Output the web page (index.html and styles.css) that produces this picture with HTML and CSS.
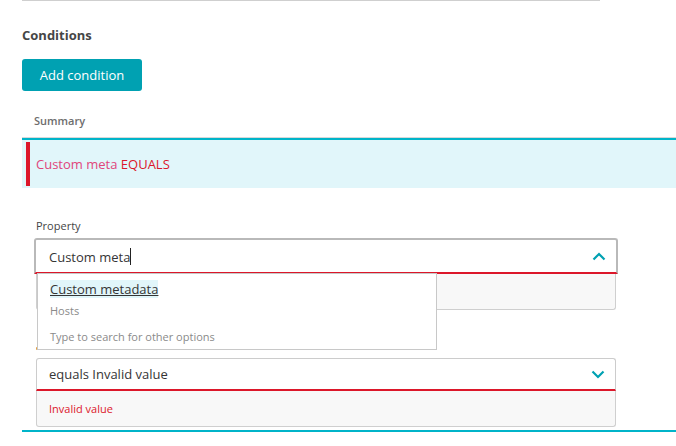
FILE: index.html
```html
<!DOCTYPE html>
<html>
<head>
<meta charset="utf-8">
<link rel="stylesheet" href="styles.css">
</head>
<body>
<div class="topline"></div>
<div class="page">
  <h2 class="title">Conditions</h2>
  <button class="btn">Add condition</button>
  <div class="summary-head">Summary</div>
  <div class="summary-row">
    <div class="flag"></div>
    <div class="summary-text"><span class="pink">Custom meta</span> <span class="red">EQUALS</span></div>
  </div>
  <div class="form">
    <div class="label">Property</div>
    <div class="field">
      <div class="input focused">
        <span class="value">Custom meta</span><span class="caret"></span>
        <svg class="chev" width="14" height="9" viewBox="0 0 14 9"><path d="M1.5 7.5 L7 2 L12.5 7.5" fill="none" stroke="#00a1b2" stroke-width="2.2"/></svg>
      </div>
      <div class="below"></div>
      <div class="dropdown">
        <div class="opt"><span class="opt-main">Custom metadata</span></div>
        <div class="opt-sub">Hosts</div>
        <div class="opt-hint">Type to search for other options</div>
      </div>
    </div>
    <div class="label2"><span class="dot"></span></div>
    <div class="field">
      <div class="input">
        <span class="value">equals Invalid value</span>
        <svg class="chev" width="14" height="9" viewBox="0 0 14 9"><path d="M1.5 1.5 L7 7 L12.5 1.5" fill="none" stroke="#00a1b2" stroke-width="2.2"/></svg>
      </div>
      <div class="below err">Invalid value</div>
    </div>
  </div>
  <div class="bottomline"></div>
</div>
</body>
</html>
```
FILE: styles.css
```css
html, body {
  margin: 0;
  padding: 0;
  background: #fff;
}
body {
  font-family: "Open Sans", "Liberation Sans", sans-serif;
  color: #454646;
  width: 676px;
  height: 446px;
  overflow: hidden;
}
.topline {
  margin-left: 22px;
  width: 578px;
  height: 1px;
  background: #cfcfcf;
}
.page {
  padding-left: 22px;
}
.title {
  margin: 0;
  padding-top: 25px;
  font-size: 13px;
  line-height: 18px;
  font-weight: 700;
  color: #454646;
}
.btn {
  display: block;
  margin-top: 15px;
  width: 120px;
  height: 32px;
  border: 0;
  border-radius: 3px;
  background: #00a1b2;
  color: #fff;
  font-family: inherit;
  font-size: 13px;
  padding: 0;
}
.summary-head {
  margin-top: 22px;
  padding-left: 12px;
  font-size: 11px;
  font-weight: 600;
  line-height: 15px;
  color: #6d6d6d;
  height: 25px;
  border-bottom: 1px solid #d8d8d8;
  box-sizing: border-box;
}
.summary-row {
  border-top: 2px solid #00b4c9;
  background: #e1f6fa;
  height: 50px;
  display: flex;
  align-items: center;
  padding: 2px 0 2px 4px;
  box-sizing: border-box;
}
.flag {
  width: 4px;
  align-self: stretch;
  background: #dc172a;
}
.summary-text {
  margin-left: 6px;
  font-size: 13px;
  line-height: 18px;
}
.pink { color: #e0457b; }
.red { color: #dc172a; }
.form {
  padding-left: 14px;
  padding-right: 60px;
  padding-top: 30px;
}
.label {
  font-size: 11px;
  line-height: 15px;
  color: #454646;
  height: 20px;
}
.label2 {
  margin-top: 31px;
  height: 17px;
  padding-top: 6px;
  box-sizing: border-box;
}
.dot {
  display: block;
  width: 2px;
  height: 3px;
  background: #e6a245;
  border-radius: 1px;
}
.field {
  position: relative;
}
.input {
  height: 33px;
  border: 1px solid #cccccc;
  border-bottom: 2px solid #dc172a;
  border-radius: 3px 3px 0 0;
  background: #fff;
  display: flex;
  align-items: center;
  padding: 0 10px 0 12px;
  box-sizing: border-box;
  font-size: 13px;
  color: #353535;
}
.input.focused {
  margin: 0 -2px;
  height: 36px;
  border: 2px solid #b9b9b9;
  border-bottom: 2px solid #dc172a;
  padding-left: 13px;
  padding-top: 1px;
}
.value {
  line-height: 18px;
}
.caret {
  display: inline-block;
  width: 1px;
  height: 17px;
  background: #222;
}
.chev {
  margin-left: auto;
}
.below {
  height: 36px;
  background: #f8f8f8;
  border: 1px solid #cfcfcf;
  border-top: 0;
  border-radius: 0 0 3px 3px;
  box-sizing: border-box;
}
.below.err {
  color: #dc172a;
  font-size: 11px;
  line-height: 15px;
  padding: 10px 0 0 12px;
}
.dropdown {
  position: absolute;
  left: 1px;
  top: 35px;
  width: 400px;
  height: 77px;
  background: #fff;
  border: 1px solid #c8c8c8;
  box-sizing: border-box;
  padding: 5px 0 0 12px;
}
.opt {
  height: 21px;
  line-height: 20px;
}
.opt-main {
  display: inline-block;
  vertical-align: top;
  margin-top: 1px;
  background: #e1f6fa;
  color: #353535;
  font-size: 13px;
  line-height: 18px;
  text-decoration: underline;
}
.opt-sub {
  margin-top: 3px;
  font-size: 11px;
  line-height: 15px;
  color: #8a8a8a;
}
.opt-hint {
  margin-top: 11px;
  font-size: 11px;
  line-height: 15px;
  color: #8a8a8a;
}
.bottomline {
  margin-top: 3px;
  height: 2px;
  background: #00b4c9;
}
```
